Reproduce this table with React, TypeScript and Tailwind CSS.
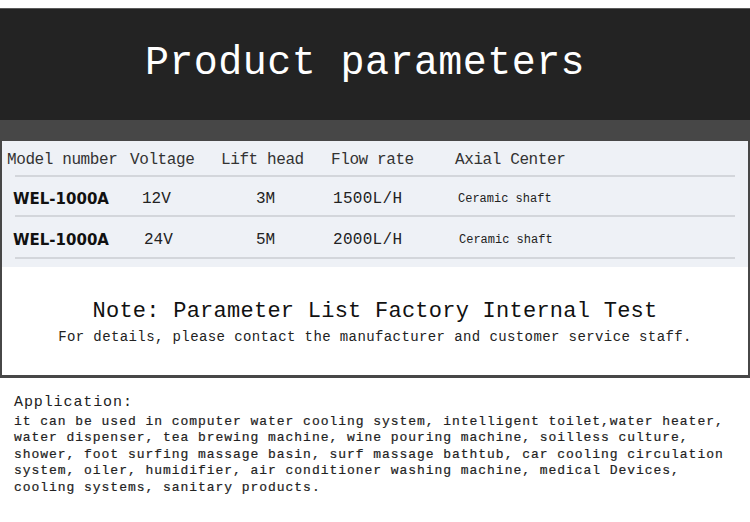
import React from 'react';

const mono = { fontFamily: '"Liberation Mono", "DejaVu Sans Mono", monospace' };

export default function App() {
  const rows = [
    { model: 'WEL-1000A', volt: '12V', voltPad: 'pl-[12px]', lift: '3M', flow: '1500L/H', axial: 'Ceramic shaft', axPad: 'pl-[3px]', h: 'h-[40px]' },
    { model: 'WEL-1000A', volt: '24V', voltPad: 'pl-[14px]', lift: '5M', flow: '2000L/H', axial: 'Ceramic shaft', axPad: 'pl-[4px]', h: 'h-[42px]' },
  ];

  const application = [
    'it can be used in computer water cooling system, intelligent toilet,water heater,',
    'water dispenser, tea brewing machine, wine pouring machine, soilless culture,',
    'shower, foot surfing massage basin, surf massage bathtub, car cooling circulation',
    'system, oiler, humidifier, air conditioner washing machine, medical Devices,',
    'cooling systems, sanitary products.',
  ];

  return (
    <div className="w-[750px] h-[522px] bg-white overflow-hidden" style={mono}>
      {/* Banner */}
      <div className="pt-[8px]">
        <div className="h-[112px] bg-[#232323] border-t border-[#5a5a5a] flex items-center justify-center">
          <h1 className="text-[40px] tracking-[0.45px] text-white leading-none -mt-[2px] -ml-[20px]">
            Product parameters
          </h1>
        </div>
      </div>

      {/* Parameter frame */}
      <div className="bg-[#474747] pt-[21px] px-[2px] pb-[3px]">
        <div className="bg-white">
          <div className="bg-[#eef1f6] h-[126px]">
            {/* header */}
            <div className="h-[36px] flex flex-col">
              <div className="flex-1 grid grid-cols-[123px_91px_110px_124px_1fr] pl-[5px] pt-[4px] items-center text-[16px] tracking-[-0.4px] text-[#333]">
                <span>Model number</span>
                <span>Voltage</span>
                <span>Lift head</span>
                <span>Flow rate</span>
                <span>Axial Center</span>
              </div>
              <div className="mx-[13px] h-[2px] bg-[#d3d6db]" />
            </div>
            {rows.map((r, i) => (
              <div key={i} className={`${r.h} flex flex-col`}>
                <div className="flex-1 grid grid-cols-[123px_91px_110px_124px_1fr] pl-[5px] pt-[6px] items-center">
                  <span
                    className="pl-[6px] text-[15px] font-bold text-[#111]"
                    style={{ fontFamily: '"DejaVu Sans", Verdana, sans-serif' }}
                  >
                    {r.model}
                  </span>
                  <span className={`${r.voltPad} text-[16px] text-[#222]`}>{r.volt}</span>
                  <span className="pl-[35px] text-[16px] text-[#222]">{r.lift}</span>
                  <span className="pl-[2px] text-[16px] text-[#222] tracking-[0.3px]">{r.flow}</span>
                  <span className={`${r.axPad} text-[12px] text-[#222]`}>{r.axial}</span>
                </div>
                <div className="mx-[13px] h-[2px] bg-[#d3d6db]" />
              </div>
            ))}
          </div>

          {/* note */}
          <div className="h-[108px] flex flex-col items-center pt-[31px]">
            <p className="text-[22px] tracking-[0.25px] text-[#111] leading-[28px]">
              Note: Parameter List Factory Internal Test
            </p>
            <p className="text-[14px] tracking-[0.4px] text-[#222] leading-[20px] mt-[1px]">
              For details, please contact the manufacturer and customer service staff.
            </p>
          </div>
        </div>
      </div>

      {/* Application */}
      <div className="pl-[14px] pt-[16px] text-[#222]">
        <p className="text-[15px] tracking-[0.9px] leading-[18px]">Application:</p>
        <div className="text-[13px] tracking-[0.96px] leading-[16.4px] mt-[2px] [-webkit-text-stroke:0.2px_#222]">
          {application.map((line, i) => (
            <div key={i} className="whitespace-pre">{line}</div>
          ))}
        </div>
      </div>
    </div>
  );
}
